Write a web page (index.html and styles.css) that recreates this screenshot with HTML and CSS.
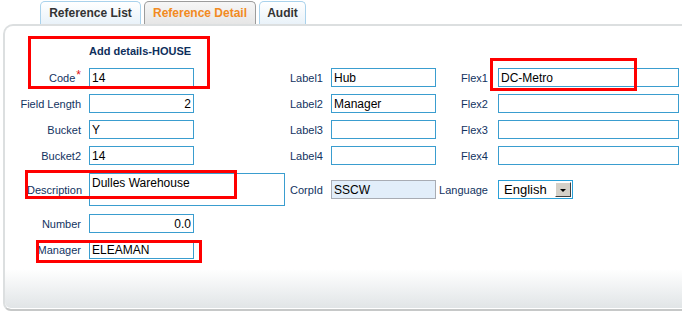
FILE: index.html
```html
<!DOCTYPE html>
<html lang="en">
<head>
    <meta charset="UTF-8">
    <meta name="viewport" content="width=device-width, initial-scale=1.0">
    <title>Reference Detail</title>
    <link rel="stylesheet" href="styles.css">
</head>
<body>
    <div class="tabs">
        <div class="tab tab-list">Reference List</div>
        <div class="tab tab-detail active">Reference Detail</div>
        <div class="tab tab-audit">Audit</div>
    </div>

    <div class="panel">
        <div class="heading">Add details-HOUSE</div>

        <div class="form">
            <label class="lbl">Code<sup>*</sup></label>
            <input class="field" type="text" value="14">
            <label class="lbl">Label1</label>
            <input class="field" type="text" value="Hub">
            <label class="lbl lbl-flex">Flex1</label>
            <input class="field wide" type="text" value="DC-Metro">

            <label class="lbl">Field Length</label>
            <input class="field num" type="text" value="2">
            <label class="lbl">Label2</label>
            <input class="field" type="text" value="Manager">
            <label class="lbl lbl-flex">Flex2</label>
            <input class="field wide" type="text" value="">

            <label class="lbl">Bucket</label>
            <input class="field" type="text" value="Y">
            <label class="lbl">Label3</label>
            <input class="field" type="text" value="">
            <label class="lbl lbl-flex">Flex3</label>
            <input class="field wide" type="text" value="">

            <label class="lbl">Bucket2</label>
            <input class="field" type="text" value="14">
            <label class="lbl">Label4</label>
            <input class="field" type="text" value="">
            <label class="lbl lbl-flex">Flex4</label>
            <input class="field wide" type="text" value="">

            <label class="lbl lbl-desc">Description</label>
            <textarea class="field desc">Dulles Warehouse</textarea>
            <label class="lbl">CorpId</label>
            <input class="field locked" type="text" value="SSCW" readonly>
            <label class="lbl lbl-flex">Language</label>
            <div class="select">
                <span class="select-text">English</span>
                <span class="select-btn"><span class="caret"></span></span>
            </div>

            <label class="lbl row-start">Number</label>
            <input class="field num" type="text" value="0.0">

            <label class="lbl row-start">Manager</label>
            <input class="field" type="text" value="ELEAMAN">
        </div>
    </div>

    <!-- review markers -->
    <div class="mark mark-head"></div>
    <div class="mark mark-flex"></div>
    <div class="mark mark-desc"></div>
    <div class="mark mark-manager"></div>
</body>
</html>
```

FILE: styles.css
```css
* {
    margin: 0;
    padding: 0;
    box-sizing: border-box;
}
body {
    background-color: #fff;
    font-family: "Liberation Sans", Arial, sans-serif;
    position: relative;
    overflow: hidden;
    height: 319px;
}

.tabs {
    display: flex;
    gap: 3px;
    height: 24px;
    padding-top: 1px;
    padding-left: 40px;
}
.tab {
    height: 23px;
    display: flex;
    align-items: center;
    justify-content: center;
    font-size: 12px;
    font-weight: bold;
    color: #333;
    border: 1px solid #a9d2ec;
    border-bottom: 0;
    border-radius: 5px 5px 0 0;
    background: linear-gradient(to bottom, #ffffff, #e9f2f9);
}
.tab-list {
    width: 101px;
}
.tab-detail {
    width: 112px;
}
.tab-audit {
    width: 47px;
}
.tab.active {
    color: #f28a22;
    border-color: #9c9c9c;
    background: linear-gradient(to bottom, #f6f6f6, #e6e6e6);
}

.panel {
    margin-left: 3px;
    margin-right: -20px;
    border: 2px solid #dcdfe0;
    border-bottom: 2px solid #c6c8c8;
    border-radius: 10px 0 0 8px;
    padding: 18px 0 50px 0;
    background: linear-gradient(to bottom, #ffffff calc(100% - 40px), #e0e4e6 100%);
    box-shadow: inset 0 -1px 0 #ffffff;
}

.heading {
    padding-left: 84px;
    line-height: 14px;
    font-size: 11px;
    font-weight: bold;
    color: #0e2f5c;
    margin-bottom: 10px;
}

.form {
    display: grid;
    grid-template-columns: 84px 105px 137px 105px 62px 181px;
    grid-template-rows: 19px 19px 19px 19px 35px 19px 19px;
    row-gap: 7px;
    align-items: center;
}

.lbl {
    font-size: 11px;
    color: #12335f;
    text-align: right;
    padding-right: 8px;
    white-space: nowrap;
}
.lbl sup {
    color: #e01010;
    font-size: 12px;
    line-height: 0;
    vertical-align: 3px;
    margin-left: 1px;
}
.lbl-flex {
    padding-right: 10px;
}
.lbl-desc {
    text-align: left;
    padding-left: 22px;
    padding-right: 0;
}
.row-start {
    grid-column: 1;
}

.field {
    display: block;
    width: 105px;
    height: 19px;
    border: 1px solid #3a9dcf;
    padding: 0 2px;
    font-family: "Liberation Sans", Arial, sans-serif;
    font-size: 12px;
    color: #000;
    background-color: #fff;
    outline: none;
}
.field.wide {
    width: 181px;
}
.field.num {
    text-align: right;
}
.field.locked {
    background-color: #e2eefa;
    border-color: #a8acb4;
}
.field.desc {
    width: 196px;
    height: 33px;
    padding-top: 2px;
    resize: none;
    overflow: hidden;
}

.select {
    display: flex;
    align-items: center;
    justify-content: space-between;
    width: 75px;
    height: 19px;
    border: 1px solid #2aa0d8;
    padding: 0 1px 0 5px;
    font-size: 13px;
    color: #000;
}
.select-btn {
    width: 16px;
    height: 15px;
    background-color: #d4d0c8;
    border: 1px solid;
    border-color: #fff #404040 #404040 #fff;
    display: flex;
    align-items: center;
    justify-content: center;
}
.caret {
    width: 0;
    height: 0;
    border-left: 3px solid transparent;
    border-right: 3px solid transparent;
    border-top: 3px solid #000;
    margin-top: 1px;
}

.mark {
    position: absolute;
    border: 3px solid #ff0000;
}
.mark-head {
    left: 28px;
    top: 36px;
    width: 182px;
    height: 53px;
}
.mark-flex {
    left: 490px;
    top: 58px;
    width: 147px;
    height: 33px;
}
.mark-desc {
    left: 25px;
    top: 170px;
    width: 212px;
    height: 29px;
}
.mark-manager {
    left: 36px;
    top: 240px;
    width: 166px;
    height: 23px;
}
```
